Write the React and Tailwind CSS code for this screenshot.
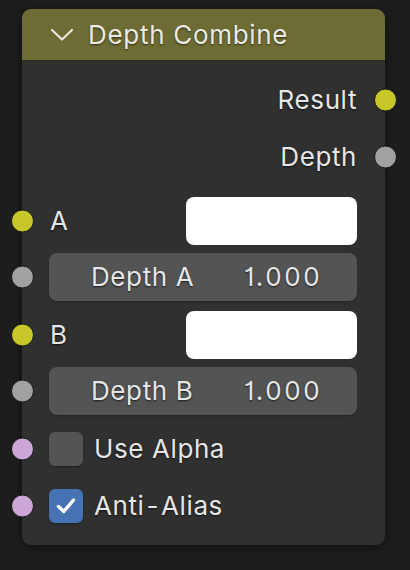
import React from 'react';

const FONT = { fontFamily: 'Inter, "Noto Sans", sans-serif', fontFeatureSettings: "'cv01'" };

const SOCKET = {
  yellow: 'bg-[#c7c729]',
  grey: 'bg-[#a1a1a1]',
  purple: 'bg-[#cca6d6]',
};

function Socket({ color, side }) {
  return (
    <span
      className={`absolute top-1/2 -translate-y-1/2 w-[23px] h-[23px] rounded-full border-[1.5px] border-[#151515] ${SOCKET[color]} ${
        side === 'left' ? 'left-[-11px]' : 'right-[-12px]'
      }`}
    />
  );
}

const txt = 'text-[26px] text-[#e6e6e6] [text-shadow:0_1px_2px_rgba(0,0,0,0.7)] leading-none tracking-[0.6px]';

function OutputRow({ label, color, className }) {
  return (
    <div className={`relative h-12 flex items-center justify-end pr-[28px] ${className}`}>
      <span className={txt}>{label}</span>
      <Socket color={color} side="right" />
    </div>
  );
}

function ColorRow({ label, className }) {
  return (
    <div className={`relative h-12 flex items-center pl-[28px] pr-[28px] ${className}`}>
      <span className={`${txt} flex-1`}>{label}</span>
      <div className="w-[171px] h-12 rounded-[8px] bg-white" />
      <Socket color="yellow" side="left" />
    </div>
  );
}

function ValueRow({ label, value, className }) {
  return (
    <div className={`relative h-12 px-[27px] pr-[28px] ${className}`}>
      <div className="h-12 rounded-[8px] bg-[#545454] flex items-center pl-[42px] shadow-[0_1px_2px_rgba(0,0,0,0.3)]">
        <span className={`${txt} w-[153px]`}>{label}</span>
        <span className="text-[26px] text-[#e6e6e6] [text-shadow:0_1px_2px_rgba(0,0,0,0.7)] leading-none tracking-[2.6px]">{value}</span>
      </div>
      <Socket color="grey" side="left" />
    </div>
  );
}

function CheckRow({ label, checked, className }) {
  return (
    <div className={`relative h-[34px] flex items-center gap-[11px] pl-[27px] ${className}`}>
      <div
        className={`w-[34px] h-[34px] rounded-[6px] flex items-center justify-center shadow-[0_1px_2px_rgba(0,0,0,0.35)] ${
          checked ? 'bg-[#4772b3]' : 'bg-[#545454]'
        }`}
      >
        {checked && (
          <svg width="24" height="24" viewBox="0 0 24 24" fill="none">
            <path d="M4.5 12.5 L9.8 17.5 L19.5 6" stroke="white" strokeWidth="3.4" strokeLinecap="round" strokeLinejoin="round" />
          </svg>
        )}
      </div>
      <span className={txt}>{label}</span>
      <Socket color="purple" side="left" />
    </div>
  );
}

export default function App() {
  return (
    <div className="w-[410px] h-[570px] bg-[#1d1d1d] pt-[9px] pl-[22px]" style={FONT}>
      <div className="w-[363px] h-[536px] rounded-[9px] bg-[#303030] flex flex-col shadow-[0_2px_8px_rgba(0,0,0,0.5)]">
        {/* header */}
        <div className="h-[52px] shrink-0 rounded-t-[9px] bg-[#6d6c35] flex items-center pl-[28px] gap-[14px] border-b border-[#2a2a1a]">
          <svg width="24" height="14" viewBox="0 0 24 14" fill="none">
            <path d="M2 2 L12 11.5 L22 2" stroke="#e8e8e0" strokeWidth="2.2" strokeLinecap="round" strokeLinejoin="round" />
          </svg>
          <span className="text-[26px] text-[#ebebe3] [text-shadow:0_1px_2px_rgba(0,0,0,0.6)] leading-none tracking-[0.7px]">Depth Combine</span>
        </div>

        <OutputRow label="Result" color="yellow" className="mt-[15px]" />
        <OutputRow label="Depth" color="grey" className="mt-[9px]" />

        <ColorRow label="A" className="mt-[16px]" />
        <ValueRow label="Depth A" value="1.000" className="mt-2" />
        <ColorRow label="B" className="mt-[10px]" />
        <ValueRow label="Depth B" value="1.000" className="mt-2" />

        <CheckRow label="Use Alpha" className="mt-[17px]" />
        <CheckRow label={<>Anti<span className="mx-[2px]">-</span>Alias</>} checked className="mt-[23px]" />
      </div>
    </div>
  );
}
